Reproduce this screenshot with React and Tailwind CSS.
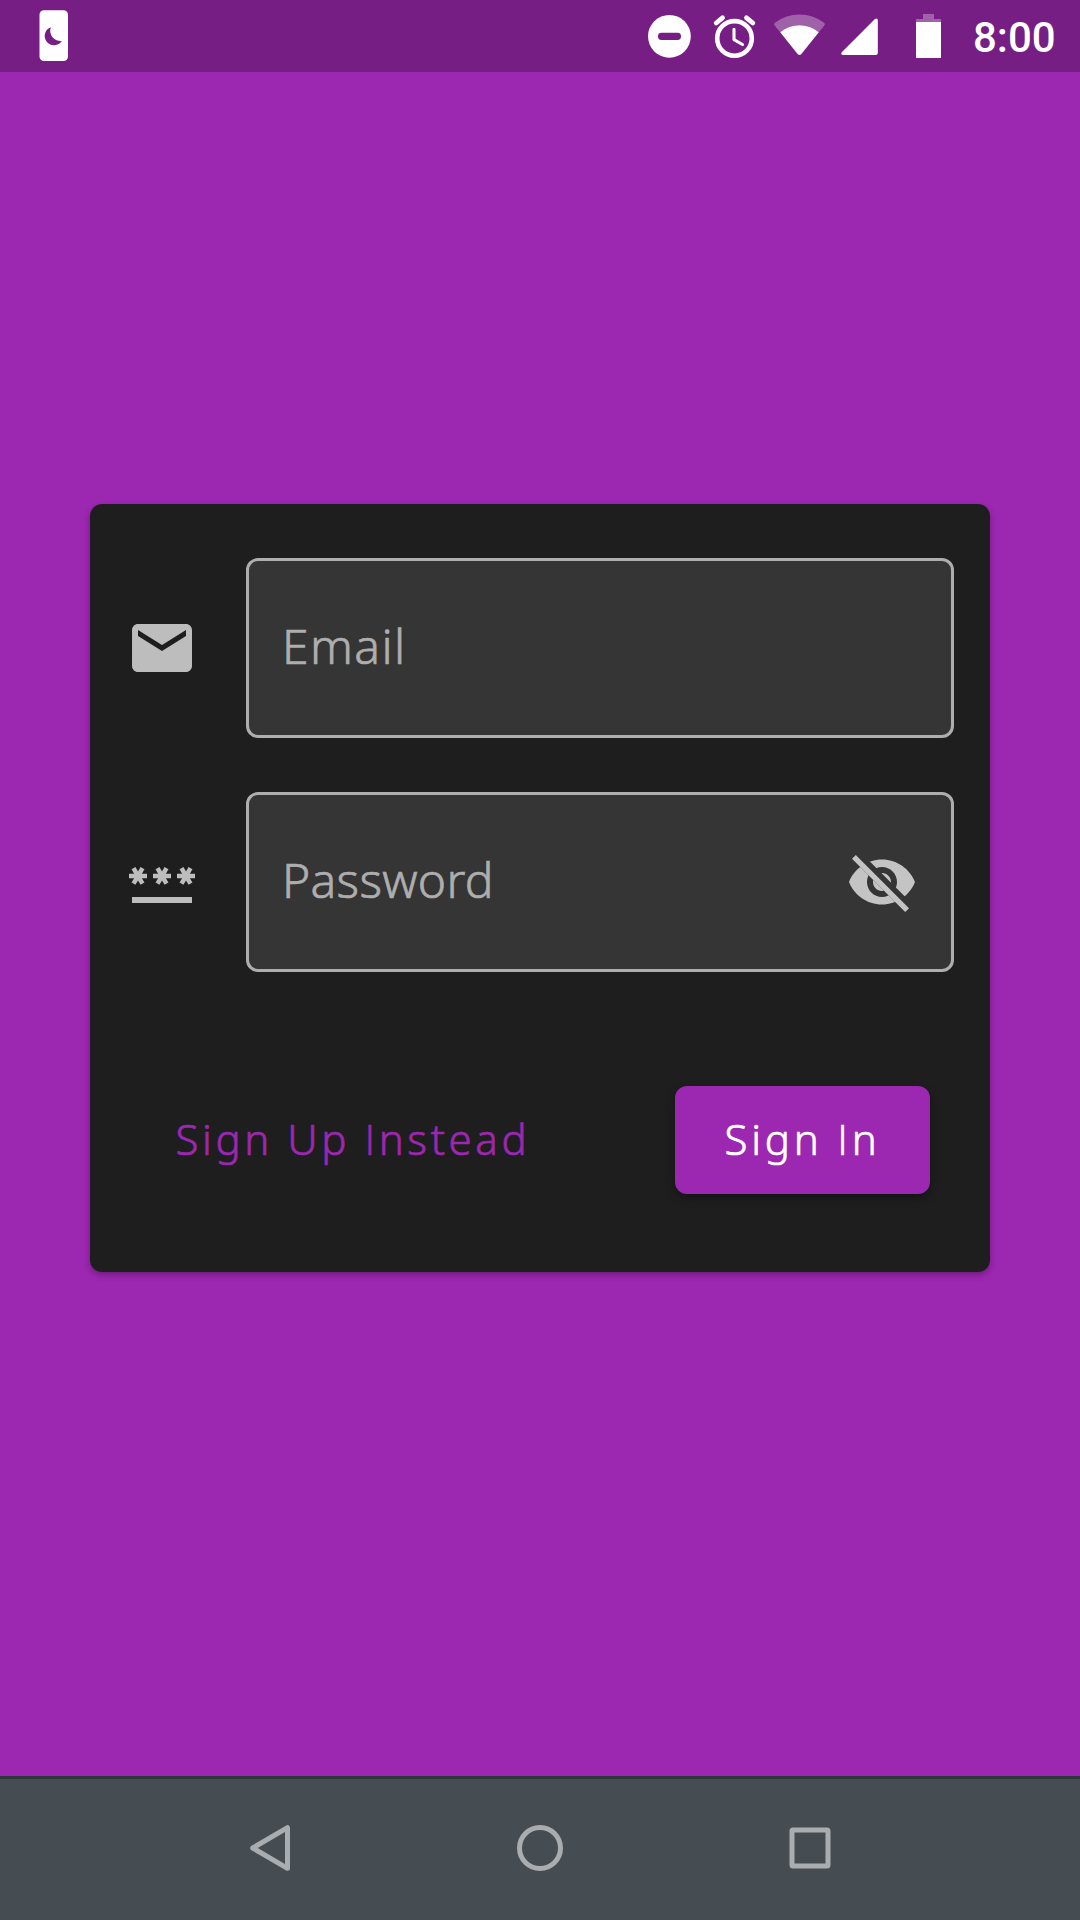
const fieldClass =
  'flex h-[180px] w-[708px] items-center justify-between rounded-[12px] border-[3px] border-[#aeaeae] bg-[#353535] pl-[33px] pr-[33px]';

function StatusBar() {
  return (
    <header className="flex h-[72px] shrink-0 items-center bg-[#761e83] text-white">
      <svg className="ml-[36px] h-[72px] w-[36px]" viewBox="36 0 36 72">
        <rect x="39.5" y="10.3" width="28.5" height="50.7" rx="4.5" fill="currentColor" />
        <path d="M50.8 27.2A9.3 9.3 0 1 0 61.8 41A10.4 10.4 0 0 1 50.8 27.2Z" fill="#761e83" />
      </svg>
      <svg className="ml-auto h-[72px] w-[48px]" viewBox="645 0 48 72">
        <circle cx="669.4" cy="36.3" r="21.4" fill="currentColor" />
        <rect x="658" y="32.8" width="23" height="7.2" rx="3.4" fill="#761e83" />
      </svg>
      <svg className="ml-[17px] h-[72px] w-[50px]" viewBox="710 0 50 72" fill="none" stroke="currentColor" strokeLinecap="round">
        <circle cx="734.5" cy="38.4" r="17.3" strokeWidth="4.6" />
        <path d="M734 29.2V39.6L742.5 44.5" strokeWidth="3.1" strokeLinejoin="round" />
        <path d="M716.2 23L722.5 17.8M752.8 23L746.5 17.8" strokeWidth="4.8" />
      </svg>
      <svg className="ml-[10px] h-[72px] w-[60px]" viewBox="770 0 60 72" fill="currentColor">
        <path d="M774.6 25.6Q773.3 24 775 22.8Q786 14.6 799.5 14.6T824 22.8Q825.7 24 824.4 25.6L818.8 32.2Q810.5 25.2 799.5 25.2T780.2 32.2Z" opacity="0.3" />
        <path d="M780.2 32.2Q788.5 25.2 799.5 25.2T818.8 32.2L801.4 54Q799.5 56 797.6 54Z" />
      </svg>
      <svg className="ml-[8px] h-[72px] w-[44px]" viewBox="838 0 44 72" fill="currentColor">
        <path d="M842 52L874.7 19.3Q877.8 17 877.8 20.6V53Q877.8 55 875.8 55H843.4Q840 54.8 842 52Z" />
      </svg>
      <svg className="ml-[32px] h-[72px] w-[28px]" viewBox="914 0 28 72" fill="currentColor">
        <path d="M923 14H934V19H941V22H916V19H923Z" opacity="0.3" />
        <path d="M916 22H941V58H916Z" />
      </svg>
      <span className="ml-[31px] mr-[24px] w-[83px] whitespace-nowrap pt-[4px] font-['Roboto'] text-[42px] font-medium leading-[72px]">
        8:00
      </span>
    </header>
  );
}

function MailIcon() {
  return (
    <svg className="size-[72px] text-[#bdbdbd]" viewBox="0 0 24 24" fill="currentColor">
      <path d="M20 4H4c-1.1 0-1.99.9-1.99 2L2 18c0 1.1.9 2 2 2h16c1.1 0 2-.9 2-2V6c0-1.1-.9-2-2-2zm0 4-8 5-8-5V6l8 5 8-5v2z" />
    </svg>
  );
}

function PasswordIcon() {
  return (
    <svg className="size-[72px] text-[#bdbdbd]" viewBox="0 0 24 24" fill="currentColor">
      <path d="M2 17h20v2H2v-2zm1.15-4.05L4 11.47l.85 1.48 1.3-.75-.85-1.48H7v-1.5H5.3l.85-1.47L4.85 7 4 8.47 3.15 7l-1.3.75.85 1.47H1v1.5h1.7l-.85 1.48 1.3.75zm6.7-.75 1.3.75.85-1.48.85 1.48 1.3-.75-.85-1.48H15v-1.5h-1.7l.85-1.47-1.3-.75L12 8.47 11.15 7l-1.3.75.85 1.47H9v1.5h1.7l-.85 1.48zM23 9.22h-1.7l.85-1.47-1.3-.75L20 8.47 19.15 7l-1.3.75.85 1.47H17v1.5h1.7l-.85 1.48 1.3.75.85-1.48.85 1.48 1.3-.75-.85-1.48H23v-1.5z" />
    </svg>
  );
}

function EyeOffIcon() {
  return (
    <svg className="size-[72px] text-[#c4c4c4]" viewBox="0 0 24 24">
      <clipPath id="eye-cut">
        <path d="M2 4.27L19.73 22L22.27 19.46L4.54 1.73V1H23V23H1V4.27Z" />
      </clipPath>
      <path
        clipPath="url(#eye-cut)"
        fill="currentColor"
        d="M12 4.5C7 4.5 2.73 7.61 1 12c1.73 4.39 6 7.5 11 7.5s9.27-3.11 11-7.5c-1.73-4.39-6-7.5-11-7.5zM12 17c-2.76 0-5-2.24-5-5s2.24-5 5-5 5 2.24 5 5-2.24 5-5 5zm0-8c-1.66 0-3 1.34-3 3s1.34 3 3 3 3-1.34 3-3-1.34-3-3-3z"
      />
      <path d="M3.27 4.27L19.74 20.74" stroke="currentColor" strokeWidth="1.8" strokeLinecap="square" />
    </svg>
  );
}

function SignInCard() {
  return (
    <section className="mx-[90px] mt-[432px] h-[768px] rounded-[12px] bg-[#1e1e1e] px-[36px] pt-[54px] shadow-[0_3px_6px_rgba(0,0,0,0.28)]">
      <div className="flex items-center justify-between">
        <MailIcon />
        <div className={fieldClass}>
          <span className="pb-[5px] font-['Noto_Sans'] text-[48px] font-light leading-none tracking-[1.4px] text-[#aeaeae] [-webkit-text-stroke:0.7px_#aeaeae]">Email</span>
        </div>
      </div>
      <div className="mt-[54px] flex items-center justify-between">
        <PasswordIcon />
        <div className={fieldClass}>
          <span className="pb-[5px] font-['Noto_Sans'] text-[48px] font-light leading-none tracking-[0.3px] text-[#aeaeae] [-webkit-text-stroke:0.7px_#aeaeae]">Password</span>
          <EyeOffIcon />
        </div>
      </div>
      <div className="mt-[114px] flex items-center justify-between pl-[49.5px] pr-[24px] font-['Noto_Sans'] text-[42px] font-light leading-none">
        <button className="whitespace-nowrap pb-[2px] tracking-[3.6px] text-[#9c27b0] [-webkit-text-stroke:0.7px_#9c27b0]">
          Sign Up <span className="font-['Open_Sans']">I</span>nstead
        </button>
        <button className="h-[108px] w-[255px] whitespace-nowrap rounded-[12px] bg-[#9c27b0] pb-[2px] tracking-[3.8px] text-white shadow-[0_4px_8px_rgba(0,0,0,0.35)] [-webkit-text-stroke:0.7px_#ffffff]">
          Sign <span className="font-['Open_Sans']">I</span>n
        </button>
      </div>
    </section>
  );
}

function NavigationBar() {
  return (
    <nav className="mt-auto flex h-[144px] shrink-0 items-center justify-center gap-[198px] border-t-[3px] border-[#2e3538] bg-[#464d52] pb-[3px] text-[#a9adb0]">
      <svg className="size-[72px]" viewBox="0 0 72 72" fill="none" stroke="currentColor" strokeWidth="5" strokeLinejoin="round">
        <path d="M18.7 36L53.5 15.7V56.3Z" />
      </svg>
      <svg className="size-[72px]" viewBox="0 0 72 72" fill="none" stroke="currentColor" strokeWidth="5">
        <circle cx="36" cy="36" r="20.5" />
      </svg>
      <svg className="size-[72px]" viewBox="0 0 72 72" fill="none" stroke="currentColor" strokeWidth="5" strokeLinejoin="round">
        <rect x="18" y="18" width="36" height="36" rx="1" />
      </svg>
    </nav>
  );
}

export default function App() {
  return (
    <main className="flex h-[1920px] w-[1080px] flex-col overflow-hidden bg-[#9c27b0]">
      <StatusBar />
      <SignInCard />
      <NavigationBar />
    </main>
  );
}
